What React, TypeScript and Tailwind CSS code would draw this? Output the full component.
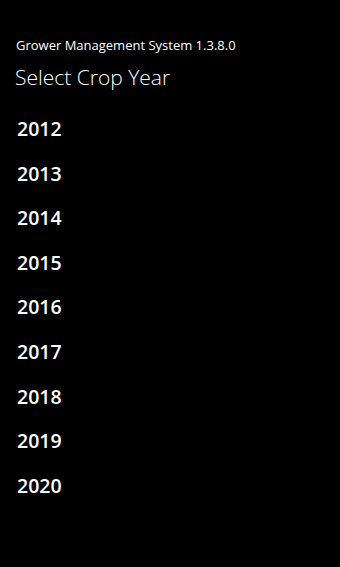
const years = ['2012', '2013', '2014', '2015', '2016', '2017', '2018', '2019', '2020']

export default function App() {
  return (
    <div
      className="w-[340px] h-[567px] bg-black text-white overflow-hidden"
      style={{ fontFamily: '"Open Sans", "Noto Sans", sans-serif' }}
    >
      <div className="pt-[37px] pl-[16px] text-[13px] leading-[16px]">Grower Management System 1.3.8.0</div>
      <div className="pl-[15px] mt-[10px] text-[21px] leading-[28px] font-light">Select Crop Year</div>
      <ul className="mt-[25px] pl-[17px]">
        {years.map((y) => (
          <li key={y} className="h-[44.6px] text-[19.5px] leading-[26px] font-semibold">
            {y}
          </li>
        ))}
      </ul>
    </div>
  )
}
